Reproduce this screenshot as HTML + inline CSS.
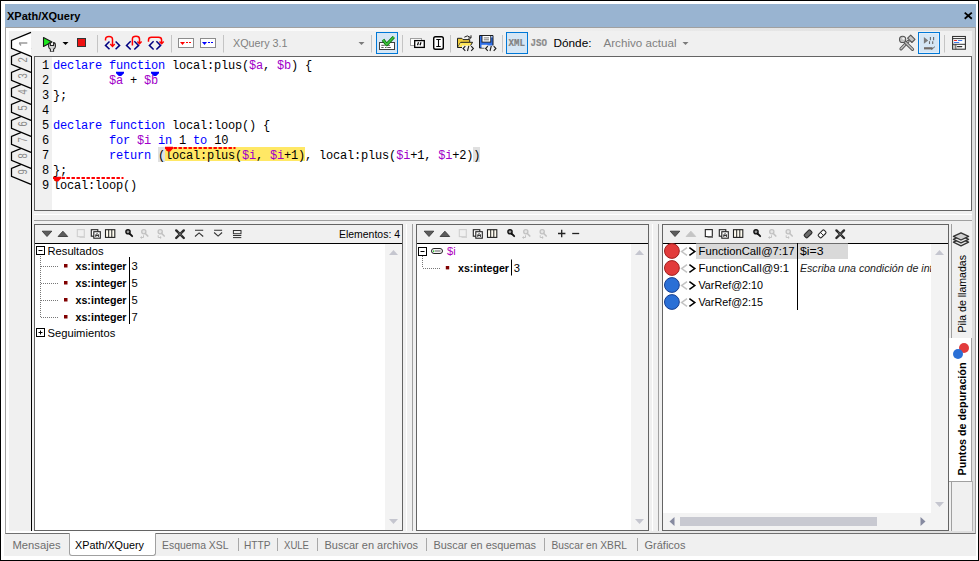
<!DOCTYPE html>
<html><head><meta charset="utf-8">
<style>
*{box-sizing:border-box}
html,body{margin:0;padding:0}
body{width:979px;height:561px;position:relative;overflow:hidden;background:#fff;font-family:"Liberation Sans",sans-serif;font-size:11px;color:#000}
.a{position:absolute}
.t{position:absolute;white-space:pre;line-height:1}
.mono{font-family:"Liberation Mono",monospace;font-size:12px;letter-spacing:-0.2px;white-space:pre;line-height:15px}
.kw{color:#0000ff}
.vr{color:#a000c8}
svg{position:absolute;overflow:visible}
</style></head><body>
<!-- outer border -->
<div class="a" style="left:0;top:0;width:979px;height:561px;border:1px solid #000"></div>
<!-- title -->
<div class="a" style="left:5px;top:4px;width:971px;height:23px;background:#99b4d1"></div>
<div class="t" style="left:7px;top:11px;font-weight:bold;font-size:11px">XPath/XQuery</div>
<svg style="left:964px;top:12px" width="9" height="8"><path d="M0.7 0.6L7.8 6.8M7.8 0.6L0.7 6.8" stroke="#000" stroke-width="1.8"/></svg>
<!-- frame -->
<div class="a" style="left:5px;top:27px;width:971px;height:507px;border:1px solid #a0a0a0;border-bottom-color:#707070;background:linear-gradient(to right,#ffffff 0px,#fafafa 300px,#e8e8e8 700px,#dedede 969px)"></div>
<div class="a" style="left:9px;top:31px;width:963px;height:500px;background:#f0f0f0"></div>

<!-- left tab strip -->
<svg style="left:0;top:0" width="40" height="200" font-family="Liberation Sans">
<path d="M31 160.3L11.5 168.3L11.5 176.3L31 184.3" fill="#f0f0f0" stroke="#000" stroke-width="1.25"/>
<path d="M31 144.3L11.5 152.3L11.5 160.3L31 168.3" fill="#f0f0f0" stroke="#000" stroke-width="1.25"/>
<path d="M31 128.3L11.5 136.3L11.5 144.3L31 152.3" fill="#f0f0f0" stroke="#000" stroke-width="1.25"/>
<path d="M31 112.3L11.5 120.3L11.5 128.3L31 136.3" fill="#f0f0f0" stroke="#000" stroke-width="1.25"/>
<path d="M31 96.3L11.5 104.3L11.5 112.3L31 120.3" fill="#f0f0f0" stroke="#000" stroke-width="1.25"/>
<path d="M31 80.3L11.5 88.3L11.5 96.3L31 104.3" fill="#f0f0f0" stroke="#000" stroke-width="1.25"/>
<path d="M31 64.3L11.5 72.3L11.5 80.3L31 88.3" fill="#f0f0f0" stroke="#000" stroke-width="1.25"/>
<path d="M31 48.3L11.5 56.3L11.5 64.3L31 72.3" fill="#f0f0f0" stroke="#000" stroke-width="1.25"/>
<path d="M31 32.3L11.5 40.3L11.5 48.3L31 56.3" fill="#fff" stroke="#000" stroke-width="1.25"/>
<path d="M19 43h8.3M19.2 43.2l1.8 2.3" stroke="#9a9a9a" stroke-width="1.35" fill="none"/>
<text transform="translate(26.8 59.9) rotate(-90) scale(0.85 1.08)" text-anchor="middle" font-size="11" fill="#8a8a8a">2</text>
<text transform="translate(26.8 75.9) rotate(-90) scale(0.85 1.08)" text-anchor="middle" font-size="11" fill="#8a8a8a">3</text>
<text transform="translate(26.8 91.9) rotate(-90) scale(0.85 1.08)" text-anchor="middle" font-size="11" fill="#8a8a8a">4</text>
<text transform="translate(26.8 107.9) rotate(-90) scale(0.85 1.08)" text-anchor="middle" font-size="11" fill="#8a8a8a">5</text>
<text transform="translate(26.8 123.9) rotate(-90) scale(0.85 1.08)" text-anchor="middle" font-size="11" fill="#8a8a8a">6</text>
<text transform="translate(26.8 139.9) rotate(-90) scale(0.85 1.08)" text-anchor="middle" font-size="11" fill="#8a8a8a">7</text>
<text transform="translate(26.8 155.9) rotate(-90) scale(0.85 1.08)" text-anchor="middle" font-size="11" fill="#8a8a8a">8</text>
<text transform="translate(26.8 171.9) rotate(-90) scale(0.85 1.08)" text-anchor="middle" font-size="11" fill="#8a8a8a">9</text>
</svg>

<div class="a" style="left:31px;top:56px;width:1px;height:475px;background:#000"></div>

<!-- toolbar -->
<div class="a" style="left:32px;top:31px;width:940px;height:25px;background:#f0f0f0"></div>

<!-- editor -->
<div class="a" style="left:34px;top:56px;width:938px;height:155px;border:1px solid #646464;background:#fff"></div>
<div class="a" style="left:35px;top:57px;width:17px;height:153px;background:#f0f0f0"></div>


<!-- code -->
<div class="mono a" style="left:42px;top:59px;color:#000">1
2
3
4
5
6
7
8
9</div>
<div class="a" style="left:158px;top:147px;width:7px;height:15px;background:#e0e0e0"></div>
<div class="a" style="left:473px;top:147px;width:7px;height:15px;background:#e0e0e0"></div>
<div class="a" style="left:165px;top:147px;width:140px;height:14px;background:#ffe865"></div>
<div class="mono a" style="left:53px;top:59px"><span class="kw">declare</span> <span class="kw">function</span> local:plus(<span class="vr">$a</span>, <span class="vr">$b</span>) {
        <span class="vr">$a</span> + <span class="vr">$b</span>
};

<span class="kw">declare</span> <span class="kw">function</span> local:loop() {
        <span class="kw">for</span> <span class="vr">$i</span> <span class="kw">in</span> 1 <span class="kw">to</span> 10
        <span class="kw">return</span> (local:plus(<span class="vr">$i</span>, <span class="vr">$i</span>+1), local:plus(<span class="vr">$i</span>+1, <span class="vr">$i</span>+2))
};
local:loop()</div>
<svg style="left:0;top:0" width="979" height="561">
<path d="M116 71.8h8v1.5l-2.8 2.8h-2.4l-2.8-2.8z" fill="#0000ff"/>
<path d="M151 71.8h8v1.5l-2.8 2.8h-2.4l-2.8-2.8z" fill="#0000ff"/>
<path d="M173.5 148h62" stroke="#ff0000" stroke-width="2" stroke-dasharray="3.4 1.6"/>
<path d="M165 146.8h8v1.8l-2.8 2.9h-2.4l-2.8-2.9z" fill="#ff0000"/>
<path d="M61.5 178h62" stroke="#ff0000" stroke-width="2" stroke-dasharray="3.4 1.6"/>
<path d="M53 176.8h8v1.8l-2.8 2.9h-2.4l-2.8-2.9z" fill="#ff0000"/>
</svg>

<!-- toolbar icons -->
<svg style="left:0;top:0" width="979" height="561" font-family="Liberation Sans">
<!-- run -->
<path d="M43.5 37.5L52 42L43.5 46.5Z" fill="#1ee81e" stroke="#1a1a1a" stroke-width="1.1" stroke-linejoin="round"/>
<path d="M48.6 45Q48.6 42.6 50.4 42.6V45.4H53.6V42.6Q55.4 42.6 55.4 45V46.6Q55.4 48.4 53.6 49.2V51.2H50.4V49.2Q48.6 48.4 48.6 46.6Z" fill="#d4d4d4" stroke="#222" stroke-width="1.05"/><path d="M52 49.5v1.8" stroke="#fff" stroke-width="1.2"/>
<path d="M62.5 42h6l-3 3z" fill="#000"/>
<rect x="77.5" y="38.5" width="8" height="8" fill="#ee1111" stroke="#333" stroke-width="1"/>
<path d="M97.5 35v17.5" stroke="#c4c4c4"/>
<!-- step into -->
<g fill="none" stroke-width="1.5">
<path d="M109.5 41.5L105.5 45.4L109.5 49.3M115.6 41.5L119.6 45.4L115.6 49.3" stroke="#000080"/>
<path d="M105.5 40.6V39.5Q105.5 36.5 109 36.5Q112.5 36.5 112.5 39.5V46" stroke="#ff0000"/>
<path d="M110.3 44l2.2 2.4l2.2-2.4" stroke="#ff0000"/>
<!-- step out -->
<path d="M130.7 41.3L126.5 45.4L130.7 49.5M134.3 41.3L138.6 45.4L134.3 49.5" stroke="#000080"/>
<path d="M132.4 45.6V39Q132.4 36.3 136 36.3Q139.5 36.3 139.5 39V43.5" stroke="#ff0000"/>
<path d="M137.4 41.5l2.1 2.2l2.1-2.2" stroke="#ff0000"/>
<!-- step over -->
<path d="M153.6 41.3L149.4 45.4L153.6 49.5M156.4 41.3L160.6 45.4L156.4 49.5" stroke="#000080"/>
<path d="M148.5 41.7V40Q148.5 37.3 151.5 37.3H158.5Q161.6 37.3 161.6 40V43.5" stroke="#ff0000"/>
<path d="M159.5 41.5l2.1 2.2l2.1-2.2" stroke="#ff0000"/>
</g>
<path d="M171.5 35v17.5" stroke="#c4c4c4"/>
<!-- bp boxes -->
<rect x="178.5" y="38.5" width="15" height="9" fill="#fff" stroke="#8c8c8c"/>
<path d="M180 42h5l-2.5 3z" fill="#ff0000"/><path d="M186 42.5h2M189 42.5h2" stroke="#ff0000" stroke-width="1.2"/>
<rect x="200.5" y="38.5" width="15" height="9" fill="#fff" stroke="#8c8c8c"/>
<path d="M202 42h5l-2.5 3z" fill="#0000ff"/><path d="M208 42.5h2M211 42.5h2" stroke="#0000ff" stroke-width="1.2"/>
<path d="M223.5 35v17.5" stroke="#c4c4c4"/>
<text x="233" y="47" font-size="11.2" fill="#808080" textLength="54.5" lengthAdjust="spacingAndGlyphs">XQuery 3.1</text>
<path d="M358.5 42h6l-3 3z" fill="#7a7a7a"/>
<path d="M371.5 35v17.5" stroke="#c4c4c4"/>
<!-- checked button -->
<rect x="376.5" y="32.5" width="21" height="21" fill="#d5e6f5" stroke="#0078d7"/>
<rect x="379.5" y="42.5" width="15" height="7" fill="#fff" stroke="#404040"/>
<path d="M381.3 45.3h3.5M386.8 45.3h3.2M381.3 47.5h2.3M385 47.5h1.5M387.3 47.5h3.5" stroke="#555" stroke-width="1"/>
<path d="M383 39.8L386.6 44.6L393.8 37" fill="none" stroke="#0a6a0a" stroke-width="3.2" stroke-linejoin="round"/>
<path d="M383 39.8L386.6 44.6L393.8 37" fill="none" stroke="#3cc23c" stroke-width="1.6" stroke-linejoin="round"/>
<path d="M402.5 35v17.5" stroke="#c4c4c4"/>
<!-- two boxes -->
<rect x="410.5" y="38.5" width="11" height="7" fill="#fff" stroke="#a0a0a0"/>
<rect x="414.7" y="40.6" width="9.6" height="6.8" fill="#fff" stroke="#000" stroke-width="1.3"/>
<path d="M418.5 42.3l-1 3M421 42.3l-1 3" stroke="#000" stroke-width="1.2"/>
<!-- I-beam -->
<rect x="433.7" y="36.7" width="9.6" height="12.6" rx="1.8" fill="#fff" stroke="#000" stroke-width="1.4"/>
<path d="M438.5 39.5v7M436.3 39.5h4.4M436.3 46.5h4.4" stroke="#000" stroke-width="1.1"/>
<path d="M450.5 35v17.5" stroke="#c4c4c4"/>
<!-- open folder -->
<path d="M457.5 47.5V38.3h4.3l1.2 1.3h6.7v2.6" fill="#f0cc3a" stroke="#1e1e1e" stroke-width="1"/>
<path d="M457.5 47.5l3.3-5.2h11.8l-3.3 5.2z" fill="#ffe658" stroke="#1e1e1e" stroke-width="1" stroke-linejoin="round"/>
<path d="M458.5 46.5l2.5-3.5" stroke="#fff6b0" stroke-width="0.8"/>
<path d="M464.3 37.2q3-2.8 6.2 0.3" fill="none" stroke="#1e1e1e" stroke-width="1"/>
<path d="M471 35.3v2.8h-2.8" fill="none" stroke="#1e1e1e" stroke-width="1"/>
<rect x="462" y="45.5" width="12" height="6.5" fill="#f0f0f0"/>
<path d="M465.3 46.2l-2.2 2.3l2.2 2.3M468.8 45.8l-1.3 5.2M471.2 46.2l2.2 2.3l-2.2 2.3" fill="none" stroke="#1e1e1e" stroke-width="1.1"/>
<!-- save -->
<path d="M479.5 35.5h13.5v12.5h-13.5z" fill="#2f6fe8" stroke="#1a1a1a" stroke-width="1"/>
<rect x="482" y="35.5" width="8.8" height="6.6" fill="#fff" stroke="#1a1a1a" stroke-width="0.9"/>
<path d="M483.8 37.9h5.2M483.8 39.8h5.2" stroke="#555" stroke-width="0.8"/>
<rect x="491.2" y="36.2" width="1.2" height="1.2" fill="#fff"/>
<rect x="481.5" y="44.8" width="6" height="3" fill="#ececec"/>
<rect x="484.5" y="45.5" width="12" height="6.5" fill="#f0f0f0"/>
<path d="M487.8 46.2l-2.2 2.3l2.2 2.3M491.3 45.8l-1.3 5.2M493.7 46.2l2.2 2.3l-2.2 2.3" fill="none" stroke="#1e1e1e" stroke-width="1.1"/>
<path d="M502.5 35v17.5" stroke="#c4c4c4"/>
<!-- XML/JSO -->
<rect x="506.5" y="32.5" width="21" height="21" fill="#d5e6f5" stroke="#0078d7"/>
<text x="508.5" y="46" font-family="Liberation Mono" font-weight="bold" font-size="10" fill="#828282" stroke="#828282" stroke-width="0.2" textLength="16.5" lengthAdjust="spacingAndGlyphs">XML</text>
<text x="530.5" y="46" font-family="Liberation Mono" font-weight="bold" font-size="10" fill="#8a8a8a" stroke="#8a8a8a" stroke-width="0.2" textLength="16.5" lengthAdjust="spacingAndGlyphs">JSO</text>
<text x="553.5" y="47" font-size="11.5" fill="#000" textLength="38" lengthAdjust="spacingAndGlyphs">Dónde:</text>
<text x="603.5" y="47" font-size="11.5" fill="#808080" textLength="73" lengthAdjust="spacingAndGlyphs">Archivo actual</text>
<path d="M682.5 42h6l-3 3z" fill="#7a7a7a"/>
<!-- tools -->
<path d="M908 41.5L901 48.8" stroke="#555" stroke-width="3.2" stroke-linecap="round"/>
<path d="M908 41.5L901 48.8" stroke="#c4c4c4" stroke-width="1.4" stroke-linecap="round"/>
<path d="M904.5 41.5L912.5 49.3" stroke="#555" stroke-width="3.2" stroke-linecap="round"/>
<path d="M904.5 41.5L912.5 49.3" stroke="#c4c4c4" stroke-width="1.4" stroke-linecap="round"/>
<circle cx="902.6" cy="39.4" r="3.1" fill="#c0c0c0" stroke="#555" stroke-width="1.1"/>
<circle cx="903.5" cy="38.6" r="1.2" fill="#f4f4f4"/>
<path d="M907.6 38.2l3.1-3.1l4.3 4.3l-3.1 3.1z" fill="#c4c4c4" stroke="#555" stroke-width="1.1" stroke-linejoin="round"/>
<!-- debug checked -->
<rect x="918.5" y="32.5" width="21" height="21" fill="#d5e6f5" stroke="#0078d7"/>
<rect x="919.5" y="33.5" width="19" height="19" fill="none" stroke="#e6f0fa" stroke-width="0.8"/>
<path d="M923.9 36.9v6.9l4.3-3.4z" fill="#7a7a7a"/>
<path d="M930.4 37v3.3M929.5 41.2v2.8M933.6 37v3.3M932.7 41.2v2.8" stroke="#6a6a6a" stroke-width="1.1"/>
<path d="M924 48.3h8.6" stroke="#706a66" stroke-width="2.2"/>
<path d="M931.3 49.6l3.6-2.9" stroke="#6a6a6a" stroke-width="1"/>
<path d="M944.5 35v17.5" stroke="#c4c4c4"/>
<!-- window icon -->
<rect x="952.6" y="36.5" width="12.8" height="12.7" fill="#fff" stroke="#333" stroke-width="1.1"/>
<path d="M952.6 38.6h12.8M952.6 44.3h12.8M955.8 44.3v5" stroke="#333" stroke-width="1"/>
<rect x="953.2" y="45" width="2.2" height="1.6" fill="#a8a8a8"/>
<rect x="953.2" y="47.3" width="2.2" height="1.6" fill="#a8a8a8"/>
<path d="M954.4 40.5h2.2" stroke="#ee2222" stroke-width="1.1" stroke-linecap="round"/>
<path d="M958.4 40.5h3.4M954.4 42.5h4.4" stroke="#3a78e8" stroke-width="1.1" stroke-linecap="round"/>
<path d="M957.4 46.6h4.4" stroke="#333" stroke-width="1.1" stroke-linecap="round"/>
</svg>

<!-- splitter lines -->
<div class="a" style="left:34px;top:214px;width:938px;height:1px;background:#fff"></div>
<div class="a" style="left:34px;top:220px;width:938px;height:1px;background:#a0a0a0"></div>

<!-- panels -->
<div class="a" style="left:34px;top:224px;width:369px;height:307px;border:1px solid #646464;background:#fff"></div>
<div class="a" style="left:416px;top:224px;width:233px;height:307px;border:1px solid #646464;background:#fff"></div>
<div class="a" style="left:662px;top:224px;width:287px;height:307px;border:1px solid #646464;background:#fff"></div>

<!-- panel toolbars -->
<div class="a" style="left:35px;top:225px;width:367px;height:19px;background:#f0f0f0;border-bottom:1px solid #000"></div>
<div class="a" style="left:417px;top:225px;width:231px;height:19px;background:#f0f0f0;border-bottom:1px solid #000"></div>
<div class="a" style="left:663px;top:225px;width:285px;height:19px;background:#f0f0f0;border-bottom:1px solid #000"></div>
<!-- scrollbars -->
<div class="a" style="left:385px;top:244px;width:17px;height:286px;background:#f3f3f3"></div>
<div class="a" style="left:631px;top:244px;width:17px;height:286px;background:#f3f3f3"></div>
<div class="a" style="left:931px;top:244px;width:17px;height:286px;background:#f3f3f3"></div>
<div class="a" style="left:663px;top:513px;width:285px;height:17px;background:#f3f3f3"></div>
<div class="a" style="left:680px;top:517px;width:197px;height:9px;background:#c8c9d1"></div>
<svg style="left:0;top:0" width="979" height="561" font-family="Liberation Sans">
<path d="M389 255h9l-4.5-5z" fill="#c5c6cf"/>
<path d="M389 519h9l-4.5 5z" fill="#c5c6cf"/>
<path d="M635 255h9l-4.5-5z" fill="#c5c6cf"/>
<path d="M635 519h9l-4.5 5z" fill="#c5c6cf"/>
<path d="M935 255h9l-4.5-5z" fill="#c5c6cf"/>
<path d="M935 502h9l-4.5 5z" fill="#c5c6cf"/>
<path d="M674.5 517v9l-5-4.5z" fill="#868aa0"/>
<path d="M920.5 517v9l5-4.5z" fill="#868aa0"/>
</svg>
<svg style="left:0;top:0" width="979" height="561" font-family="Liberation Sans">
<defs>
<g id="i-down"><path d="M8.2 231.2h9.6l-4.8 5.3z" fill="#5c5c5c" stroke="#3a3a3a" stroke-width="0.9" stroke-linejoin="round"/></g>
<g id="i-up"><path d="M24.1 236.5h9.6l-4.8-5.3z" fill="#5c5c5c" stroke="#3a3a3a" stroke-width="0.9" stroke-linejoin="round"/></g>
<g id="i-upd"><path d="M24.1 236.5h9.6l-4.8-5.3z" fill="#c4c4c4" stroke="#c4c4c4" stroke-width="0.9" stroke-linejoin="round"/></g>
<g id="i-sqd"><rect x="43.3" y="229.6" width="7" height="7" fill="none" stroke="#cfcfcf" stroke-width="1.1"/><path d="M45.5 237.2h5.5" stroke="#d4d4d4" stroke-width="1.6"/></g>
<g id="i-sq"><rect x="43.3" y="229.6" width="7" height="7" fill="#fff" stroke="#222" stroke-width="1.1"/><path d="M45.5 237.2h5.5" stroke="#777" stroke-width="1.6"/></g>
<g id="i-copy"><rect x="57.3" y="229.7" width="6.5" height="6.5" fill="#fff" stroke="#222" stroke-width="1.1"/><rect x="59.8" y="231.7" width="6.5" height="6.5" fill="#fff" stroke="#222" stroke-width="1.1"/><path d="M61.8 237v-2.5q1.3-1.6 2.6 0v2.5M61.8 235.5h2.6" fill="none" stroke="#222" stroke-width="0.9"/></g>
<g id="i-cols"><rect x="71.5" y="229.7" width="9.3" height="7.7" fill="#fffcf0" stroke="#222" stroke-width="1.1"/><path d="M74.7 229.7v7.7M77.8 229.7v7.7" stroke="#222" stroke-width="1"/></g>
<g id="i-search"><circle cx="94" cy="231.8" r="2.1" fill="#9a9a9a" stroke="#111" stroke-width="1.4"/><path d="M95.5 233.5l2.7 2.7" stroke="#111" stroke-width="1.8" stroke-linecap="round"/></g>
<g id="i-sprev"><circle cx="109.8" cy="231.8" r="2.1" fill="#e6e6e6" stroke="#c2c2c2" stroke-width="1.3"/><path d="M111.3 233.5l2.5 2.5" stroke="#c2c2c2" stroke-width="1.7" stroke-linecap="round"/><path d="M109.5 235.3v2.2h-2.8M107.8 236.5l-1.2 1l1.2 1" fill="none" stroke="#c2c2c2" stroke-width="1"/></g>
<g id="i-snext"><circle cx="126.2" cy="231.8" r="2.1" fill="#e6e6e6" stroke="#c2c2c2" stroke-width="1.3"/><path d="M127.7 233.5l2.5 2.5" stroke="#c2c2c2" stroke-width="1.7" stroke-linecap="round"/><path d="M124.2 235.3v2.2h2.8M126 236.5l1.2 1l-1.2 1" fill="none" stroke="#c2c2c2" stroke-width="1"/></g>
<g id="i-x"><path d="M142.2 230.4l7.6 7.6M149.8 230.4l-7.6 7.6" stroke="#2a2a2a" stroke-width="2.4" stroke-linecap="round"/><path d="M144 232.2l4 4M148 232.2l-4 4" stroke="#6a6a6a" stroke-width="0.8"/></g>
</defs>
<!-- panel 1 icons -->
<g transform="translate(34 0)">
<use href="#i-down"/><use href="#i-up"/><use href="#i-sqd"/><use href="#i-copy"/><use href="#i-cols"/>
<use href="#i-search"/><use href="#i-sprev"/><use href="#i-snext"/><use href="#i-x"/>
<path d="M161 230.3h8.2M161 236.5l4.1-3.6l4.1 3.6" fill="none" stroke="#333" stroke-width="1.1"/>
<path d="M180.1 230.3h8M180.1 232.5l4 3.6l4-3.6" fill="none" stroke="#333" stroke-width="1.1"/>
<rect x="199.4" y="230.5" width="7.6" height="3.2" fill="none" stroke="#333" stroke-width="1"/>
<path d="M199 235.5h8.3M199 237.6h8.3" stroke="#333" stroke-width="1"/>
</g>
<text x="339" y="238" font-size="11.2" fill="#000" textLength="61" lengthAdjust="spacingAndGlyphs">Elementos: 4</text>
<!-- panel 2 icons -->
<g transform="translate(416 0)">
<use href="#i-down"/><use href="#i-up"/><use href="#i-sqd"/><use href="#i-copy"/><use href="#i-cols"/>
<use href="#i-search"/><use href="#i-sprev"/><use href="#i-snext"/>
<path d="M142 233.5h7.4M145.7 229.8v7.4" stroke="#222" stroke-width="1.3"/>
<path d="M156.2 233.5h7" stroke="#222" stroke-width="1.3"/>
</g>
<!-- panel 3 icons -->
<g transform="translate(662 0)">
<use href="#i-down"/><use href="#i-upd"/><use href="#i-sq"/><use href="#i-copy"/><use href="#i-cols"/>
<use href="#i-search"/><use href="#i-sprev"/><use href="#i-snext"/>
<g transform="rotate(-45 146 234)"><rect x="142" y="231.8" width="8.2" height="4.4" rx="1.3" fill="#6a6a6a" stroke="#2a2a2a" stroke-width="1.1"/></g>
<g transform="rotate(-45 160 234)"><rect x="156" y="231.8" width="8.2" height="4.4" rx="1.3" fill="#fff" stroke="#2a2a2a" stroke-width="1.1"/><path d="M160 231.8v4.4" stroke="#2a2a2a" stroke-width="0.9"/></g>
<g transform="translate(32.2 0)"><use href="#i-x"/></g>
</g>

<!-- panel 1 tree -->
<rect x="36.5" y="246.5" width="8" height="8" fill="#fff" stroke="#000" stroke-width="1"/>
<path d="M38.5 250.5h4" stroke="#000"/>
<text x="47.5" y="255" font-size="11.2" fill="#000" textLength="56" lengthAdjust="spacingAndGlyphs">Resultados</text>
<path d="M40.5 256v61M41 266.5h18M41 283.5h18M41 300.5h18M41 317.5h18" stroke="#777" stroke-width="1" stroke-dasharray="1 1"/>
<rect x="64" y="264" width="3.5" height="3.5" fill="#800000"/>
<rect x="64" y="281" width="3.5" height="3.5" fill="#800000"/>
<rect x="64" y="298" width="3.5" height="3.5" fill="#800000"/>
<rect x="64" y="315" width="3.5" height="3.5" fill="#800000"/>
<text x="75.5" y="269.5" font-size="11" font-weight="bold" fill="#000" textLength="51" lengthAdjust="spacingAndGlyphs">xs:integer</text>
<text x="75.5" y="286.5" font-size="11" font-weight="bold" fill="#000" textLength="51" lengthAdjust="spacingAndGlyphs">xs:integer</text>
<text x="75.5" y="303.5" font-size="11" font-weight="bold" fill="#000" textLength="51" lengthAdjust="spacingAndGlyphs">xs:integer</text>
<text x="75.5" y="320.5" font-size="11" font-weight="bold" fill="#000" textLength="51" lengthAdjust="spacingAndGlyphs">xs:integer</text>
<path d="M129.5 257v67" stroke="#000" stroke-width="1"/>
<text x="131.5" y="269.5" font-size="11.2" fill="#000">3</text>
<text x="131.5" y="286.5" font-size="11.2" fill="#000">5</text>
<text x="131.5" y="303.5" font-size="11.2" fill="#000">5</text>
<text x="131.5" y="320.5" font-size="11.2" fill="#000">7</text>
<rect x="36.5" y="328.5" width="8" height="8" fill="#fff" stroke="#000" stroke-width="1"/>
<path d="M38.5 332.5h4M40.5 330.5v4" stroke="#000"/>
<text x="47.5" y="337" font-size="11.2" fill="#000">Seguimientos</text>

<!-- panel 2 tree -->
<rect x="418.5" y="247.5" width="8" height="8" fill="#fff" stroke="#000" stroke-width="1"/>
<path d="M420.5 251.5h4" stroke="#000"/>
<rect x="431.5" y="248.5" width="11" height="5" rx="2.5" fill="#f4f4f4" stroke="#222" stroke-width="1"/>
<path d="M435 251h5.5" stroke="#666" stroke-width="1"/>
<rect x="433" y="250.5" width="1.3" height="1.3" fill="#00c000"/>
<text x="447" y="255" font-size="11.2" fill="#b000c0">$i</text>
<path d="M422.5 256v12M423 268.5h18" stroke="#777" stroke-width="1" stroke-dasharray="1 1"/>
<rect x="445.8" y="266" width="3.4" height="3.4" fill="#800000"/>
<text x="458" y="271.5" font-size="11" font-weight="bold" fill="#000" textLength="51" lengthAdjust="spacingAndGlyphs">xs:integer</text>
<path d="M511.5 259.5v16" stroke="#000" stroke-width="1"/>
<text x="513.8" y="272" font-size="11.2" fill="#000">3</text>

<!-- panel 3 breakpoints -->
<rect x="696" y="243.5" width="101" height="15.5" fill="#d9d9d9"/>
<rect x="798" y="243.5" width="50" height="15.5" fill="#d9d9d9"/>
<path d="M797.5 243v67" stroke="#000" stroke-width="1"/>
<circle cx="671.9" cy="251" r="7.4" fill="#e23b3b" stroke="#a02020" stroke-width="1"/>
<circle cx="671.9" cy="268" r="7.4" fill="#e23b3b" stroke="#a02020" stroke-width="1"/>
<circle cx="671.9" cy="285" r="7.4" fill="#2a6fd6" stroke="#173e90" stroke-width="1"/>
<circle cx="671.9" cy="302" r="7.4" fill="#2a6fd6" stroke="#173e90" stroke-width="1"/>
<g fill="none" stroke-width="1.5">
<path d="M687 247.7l-5.4 3.85l5.4 3.85" stroke="#c4c4c4"/><path d="M689.4 247.7l5.4 3.85l-5.4 3.85" stroke="#000"/>
<path d="M687 264.7l-5.4 3.85l5.4 3.85" stroke="#c4c4c4"/><path d="M689.4 264.7l5.4 3.85l-5.4 3.85" stroke="#000"/>
<path d="M687 281.7l-5.4 3.85l5.4 3.85" stroke="#c4c4c4"/><path d="M689.4 281.7l5.4 3.85l-5.4 3.85" stroke="#000"/>
<path d="M687 298.7l-5.4 3.85l5.4 3.85" stroke="#c4c4c4"/><path d="M689.4 298.7l5.4 3.85l-5.4 3.85" stroke="#000"/>
</g>
<text x="698.5" y="254.5" font-size="11.3" fill="#000" textLength="96" lengthAdjust="spacingAndGlyphs">FunctionCall@7:17</text>
<text x="698.5" y="271.5" font-size="11.3" fill="#000" textLength="90.5" lengthAdjust="spacingAndGlyphs">FunctionCall@9:1</text>
<text x="698.5" y="288.5" font-size="11.3" fill="#000" textLength="64.5" lengthAdjust="spacingAndGlyphs">VarRef@2:10</text>
<text x="698.5" y="305.5" font-size="11.3" fill="#000" textLength="64.5" lengthAdjust="spacingAndGlyphs">VarRef@2:15</text>
<text x="800" y="254.5" font-size="11.3" fill="#000" textLength="23.5" lengthAdjust="spacingAndGlyphs">$i=3</text>
<svg x="799" y="259" width="132" height="17" style="overflow:hidden"><text x="1" y="12.5" font-size="10.6" font-style="italic" fill="#222">Escriba una condición de intervención</text></svg>
</svg>

<!-- bottom tab bar -->
<div class="a" style="left:4px;top:534px;width:972px;height:22px;background:#f0f0f0"></div>
<!-- vertical splitters -->
<div class="a" style="left:406px;top:224px;width:1px;height:307px;background:#fff"></div>
<div class="a" style="left:412px;top:224px;width:1px;height:307px;background:#a0a0a0"></div>
<div class="a" style="left:652px;top:224px;width:1px;height:307px;background:#fff"></div>
<div class="a" style="left:658px;top:224px;width:1px;height:307px;background:#a0a0a0"></div>
<!-- right tab strip -->
<div class="a" style="left:951px;top:224px;width:21px;height:115px;background:#f0f0f0;border-left:1px solid #a0a0a0;border-bottom:1px solid #a0a0a0"></div>
<div class="a" style="left:949px;top:338px;width:23px;height:144px;background:#fff;border-right:1px solid #a0a0a0;border-bottom:1px solid #a0a0a0"></div>
<div class="a" style="left:951px;top:481px;width:22px;height:50px;border-left:1px solid #a0a0a0;border-right:1px solid #b4b4b4"></div>
<svg style="left:0;top:0" width="979" height="561" font-family="Liberation Sans">
<g stroke="#333" stroke-width="1.3" stroke-linejoin="round">
<path d="M961 238.6l7.6 3.6l-7.6 3.6l-7.6-3.6z" fill="#e8e8e8"/>
<path d="M961 235.7l7.6 3.6l-7.6 3.6l-7.6-3.6z" fill="#e8e8e8"/>
<path d="M961 232.8l7.6 3.6l-7.6 3.6l-7.6-3.6z" fill="#d0d0d0"/>
</g>
<text transform="translate(965.5 332.5) rotate(-90)" font-size="11" fill="#000" textLength="77.5" lengthAdjust="spacingAndGlyphs">Pila de llamadas</text>
<circle cx="964" cy="348" r="5" fill="#e23b3b"/>
<circle cx="958" cy="354" r="5" fill="#2a6fd6"/>
<text transform="translate(966 475.5) rotate(-90)" font-size="11.2" font-weight="bold" fill="#000" textLength="113" lengthAdjust="spacingAndGlyphs">Puntos de depuración</text>
</svg>
<!-- bottom tabs -->
<div class="a" style="left:69px;top:533px;width:87px;height:23px;background:#fff;border:1px solid #a0a0a0;border-top:none;border-radius:0 0 3px 3px"></div>
<svg style="left:0;top:0" width="979" height="561" font-family="Liberation Sans">
<g font-size="11.2" fill="#6d6d6d">
<text x="12.5" y="549" textLength="48" lengthAdjust="spacingAndGlyphs">Mensajes</text>
<text x="162" y="549" textLength="66.5" lengthAdjust="spacingAndGlyphs">Esquema XSL</text>
<text x="244" y="549" textLength="26.5" lengthAdjust="spacingAndGlyphs">HTTP</text>
<text x="284" y="549" textLength="25" lengthAdjust="spacingAndGlyphs">XULE</text>
<text x="324.5" y="549" textLength="93.5" lengthAdjust="spacingAndGlyphs">Buscar en archivos</text>
<text x="433.5" y="549" textLength="102.5" lengthAdjust="spacingAndGlyphs">Buscar en esquemas</text>
<text x="551.5" y="549" textLength="75.5" lengthAdjust="spacingAndGlyphs">Buscar en XBRL</text>
<text x="644.5" y="549" textLength="41" lengthAdjust="spacingAndGlyphs">Gráficos</text>
</g>
<text x="75" y="549" font-size="11.2" fill="#000" textLength="69" lengthAdjust="spacingAndGlyphs">XPath/XQuery</text>
<path d="M238.5 538v13M277.5 538v13M317.5 538v13M426.5 538v13M544.5 538v13M637.5 538v13" stroke="#a8a8a8"/>
</svg>


</body></html>
